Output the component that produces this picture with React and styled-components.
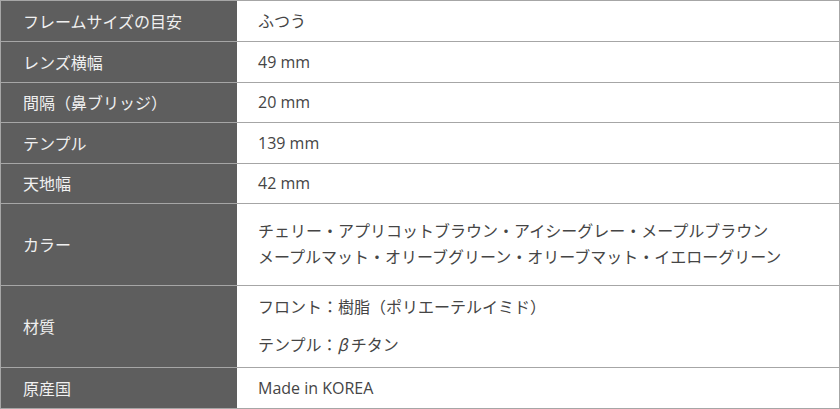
import React from 'react'
import styled, { createGlobalStyle } from 'styled-components'

const GlobalStyle = createGlobalStyle`
    body {
        margin: 0;
        background: #ffffff;
        font-family: "Open Sans", "Noto Sans CJK JP", sans-serif;
    }
`;

// spec table
const SpecTable = styled.table`
    width: 840px;
    border-collapse: collapse;
    border: 1px solid #a6a6a6;
    font-size: 16px;
`;

const Row = styled.tr`
    height: ${props => props.h}px;
`;

// left label cell
const Label = styled.th`
    width: 214px;
    padding: 0 0 1px 22px;
    background-color: #5e5e5e;
    color: #f0f0f0;
    font-weight: normal;
    text-align: left;
    border-bottom: 1px solid #a6a6a6;
`;

// right value cell
const Value = styled.td`
    padding: 0 0 1px 21px;
    color: #454545;
    border-bottom: 1px solid #a6a6a6;
    line-height: ${props => props.gap || '26px'};
`;

// greek letter in the CJK face
const Greek = styled.span`
    font-family: "Noto Sans CJK JP", sans-serif;
    font-style: italic;
    margin-right: 3px;
`;

const specs = [
    ['フレームサイズの目安', ['ふつう'], 41],
    ['レンズ横幅', ['49 mm'], 41],
    ['間隔（鼻ブリッジ）', ['20 mm'], 40],
    ['テンプル', ['139 mm'], 41],
    ['天地幅', ['42 mm'], 40],
    ['カラー', [
        'チェリー・アプリコットブラウン・アイシーグレー・メープルブラウン',
        'メープルマット・オリーブグリーン・オリーブマット・イエローグリーン',
    ], 82],
    ['材質', [
        'フロント：樹脂（ポリエーテルイミド）',
        <>テンプル：<Greek>β</Greek>チタン</>,
    ], 82, '37px'],
    ['原産国', ['Made in KOREA'], 41],
];

export default function App() {
    return (
        <>
            <GlobalStyle />
            <SpecTable>
                <tbody>
                    {specs.map(([label, lines, h, gap]) => (
                        <Row key={label} h={h}>
                            <Label>{label}</Label>
                            <Value gap={gap}>
                                {lines.map((l, i) => (
                                    <div key={i}>{l}</div>
                                ))}
                            </Value>
                        </Row>
                    ))}
                </tbody>
            </SpecTable>
        </>
    );
}
